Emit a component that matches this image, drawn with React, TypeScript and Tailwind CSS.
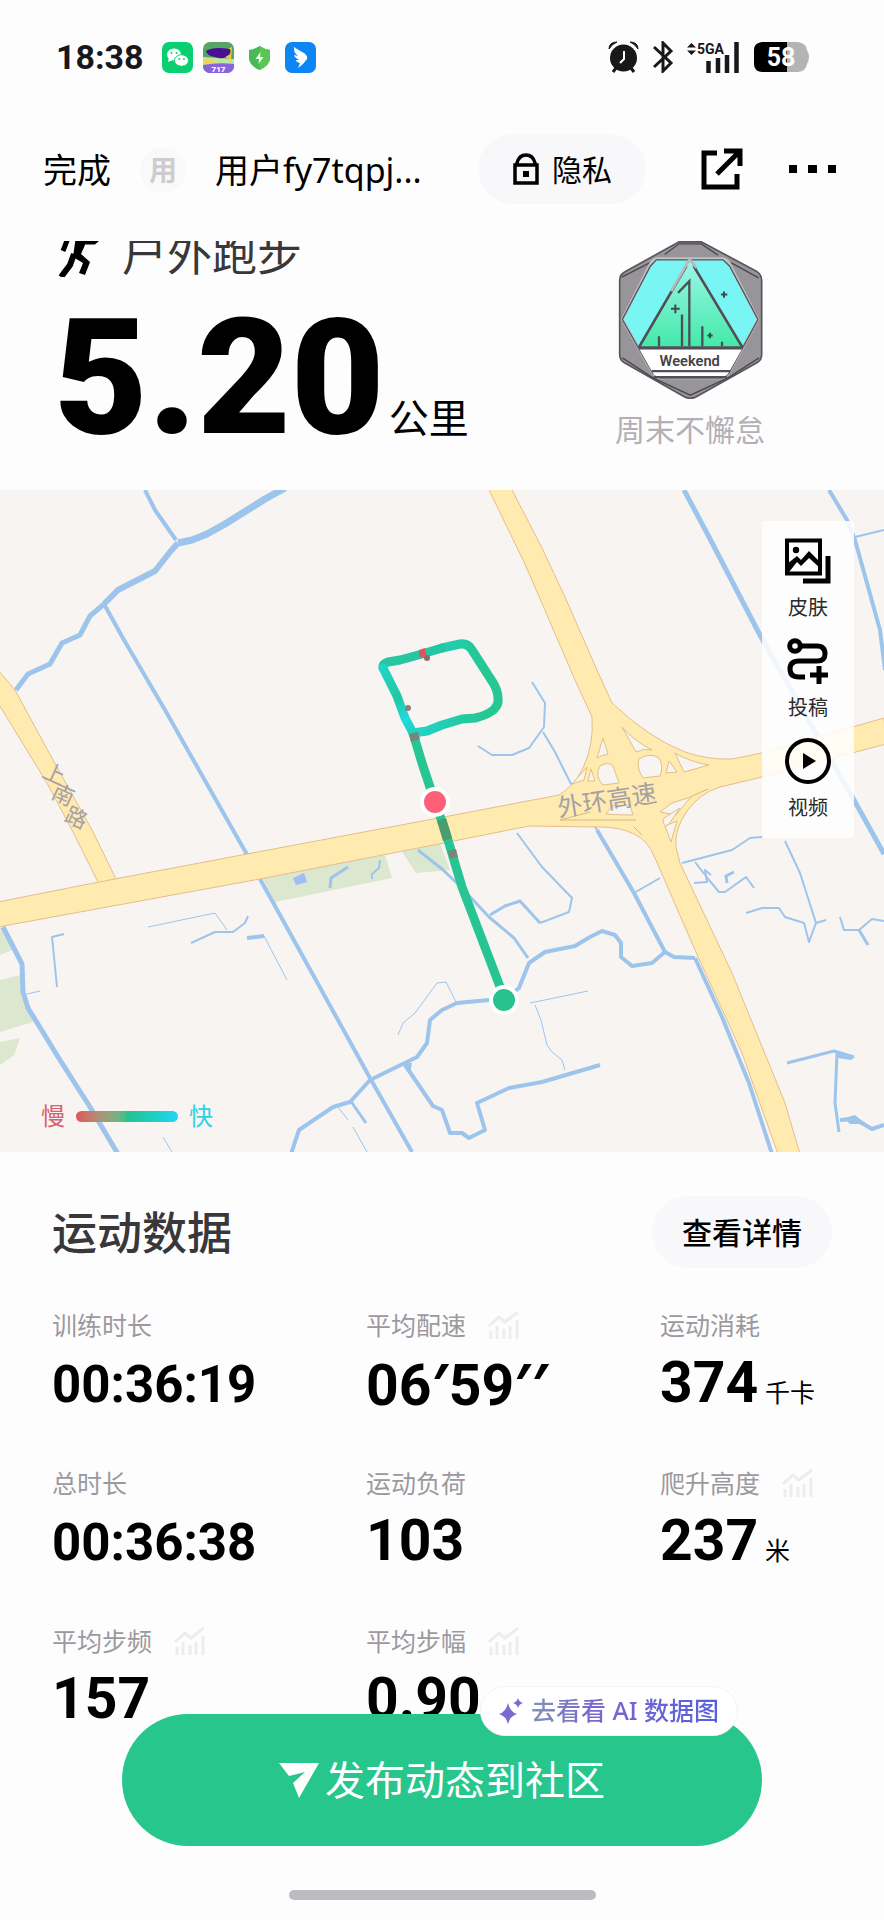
import type { ReactNode } from "react";

const RIVER = "#9dc5ec";
const LAND = "#f8f4f2";
const ROAD = "#ffebb0";

type Stat = { label: string; value: string; unit?: string; chart?: boolean; small?: boolean };

const STATS: Stat[] = [
  { label: "训练时长", value: "00:36:19", small: true },
  { label: "平均配速", value: "06′59′′", chart: true },
  { label: "运动消耗", value: "374", unit: "千卡" },
  { label: "总时长", value: "00:36:38", small: true },
  { label: "运动负荷", value: "103" },
  { label: "爬升高度", value: "237", unit: "米", chart: true },
  { label: "平均步频", value: "157", chart: true },
  { label: "平均步幅", value: "0.90", chart: true },
];

// 河道：[路径点, 线宽]
const RIVERS: [string, number][] = [
  ["145,0 155,20 176,50", 4],
  ["285,-2 265,9 225,34 207,44 192,50 178,53", 7],
  ["178,53 170,62 155,81 118,100 104,114", 6],
  ["104,114 90,126 80,145 62,153 50,174 28,184 16,200", 5],
  ["104,114 124,150 165,220 233,340 249,368", 4],
  ["260,389 275,416 370,588 412,662", 4],
  ["3,437 22,474 23,502 28,518 60,570 90,617 118,664", 5],
  ["148,437 215,423 227,440", 1],
  ["191,453 215,442 233,442 245,433 248,426", 2],
  ["247,448 264,446", 4],
  ["264,446 287,490", 1],
  ["64,444 52,447 57,497", 2],
  ["27,504 40,501", 1],
  ["348,377 331,388 330,398", 3],
  ["380,370 379,378 372,384 372,389", 2],
  ["418,360 442,379 459,395 475,412 489,427 514,448 528,468", 3],
  ["291,664 299,640 333,617 350,612 370,590 417,567 427,553 430,530 442,520 457,513 489,510 504,510 519,498 529,473 545,462 575,456 590,447 602,441 615,445 621,453 621,467 632,476 652,473 665,462 674,467 695,468", 4],
  ["695,468 722,527 749,593 772,664", 4],
  ["405,575 433,616 442,620 450,643 462,643 469,648 485,640 477,613 509,598 542,592 600,575", 4],
  ["530,513 588,501", 1],
  ["535,515 541,530 547,555 552,562 562,570 565,580", 1],
  ["456,512 446,492 437,493 415,523 403,533 398,545", 1],
  ["350,610 366,633", 3],
  ["338,617 348,630", 1],
  ["353,637 367,662", 1],
  ["163,647 172,662", 1],
  ["517,343 542,377 572,408 569,422 540,433", 2],
  ["540,433 520,411 505,416 490,425", 3],
  ["597,340 634,403 665,462", 4],
  ["634,403 660,388", 2],
  ["532,192 545,213 544,237 529,258 512,265 492,265 478,256", 2],
  ["543,242 555,262 569,290 597,340", 2],
  ["684,0 709,47 761,147 854,310 884,364", 5],
  ["829,0 847,30 855,50 880,140 885,180", 4],
  ["855,47 884,40", 2],
  ["682,373 732,360 750,348 762,347", 2],
  ["785,351 800,383 816,433 809,452 804,433 785,427 779,418 762,418 746,423", 2],
  ["816,433 826,430", 2],
  ["695,372 709,390 719,402 725,402 746,387 754,398", 2],
  ["694,393 707,392 705,380 711,385", 2],
  ["734,382 726,386 727,393", 3],
  ["840,427 844,440 859,440 872,429 884,431", 2],
  ["859,440 868,455", 3],
  ["787,573 834,561 854,567", 3],
  ["837,563 835,613 839,642", 3],
  ["840,630 855,629 872,639 884,635", 4],
];

// 立交桥匝道之间露出的地面
const GAPS = [
  "M622 237L636 262Q644 258 652 260Q633 250 622 237Z",
  "M639 269Q650 262 659 268Q664 276 660 286L643 288Q636 277 639 269Z",
  "M603 248L608 264Q602 265 597 268Z",
  "M600 276Q608 271 613 276L619 293L603 295Q594 286 600 276Z",
  "M675 263Q690 272 709 275L684 282Z",
  "M669 271L677 282L666 283Z",
  "M587 277L584 290L572 294Z",
  "M591 279L595 291L588 291Z",
  "M612 316L630 315L633 325Q618 325 606 324Z",
  "M660 322L672 313L691 307Q678 322 676 325Z",
  "M680 318L667 337Q661 333 664 328Z",
  "M665 336L677 331L671 352Z",
];

function WechatIcon() {
  return (
    <svg width="31" height="31" viewBox="0 0 31 31" aria-hidden="true">
      <rect width="31" height="31" rx="7" fill="#09cf70" />
      <path d="M6 20L7 15L13 17Z M24 24L23 20L19 21Z" fill="#fff" />
      <ellipse cx="12" cy="12.500" rx="7" ry="6" fill="#fff" />
      <ellipse cx="19.500" cy="18.500" rx="7" ry="5.800" fill="#fff" stroke="#09cf70" />
      <g fill="#09cf70">
        <circle cx="9.500" cy="11" r="1" />
        <circle cx="14.500" cy="11" r="1" />
        <circle cx="17.300" cy="17" r="1" />
        <circle cx="22" cy="17" r="1" />
      </g>
    </svg>
  );
}

function GameIcon() {
  return (
    <svg width="31" height="31" viewBox="0 0 31 31" aria-hidden="true">
      <clipPath id="game">
        <rect width="31" height="31" rx="7" />
      </clipPath>
      <g clipPath="url(#game)">
        <rect width="31" height="31" fill="#56a565" />
        <path d="M0 15L31 17V24H0Z" fill="#bfe6a0" />
        <path d="M0 18Q8 15 12 21L0 23Z" fill="#f1d84b" />
        <path d="M22 8L29 5L28 18L22 15Z" fill="#e3d02f" />
        <path d="M3 9Q10 4 27 7Q29 12 24 14Q20 18 12 15Q4 14 3 9Z" fill="#4a0e94" />
        <path d="M0 23Q15 20 31 22V31H0Z" fill="#8863dc" />
        <text x="15.500" y="30" textAnchor="middle" fill="#fff" fontSize="8" fontWeight="900" fontFamily="Roboto, sans-serif">717</text>
      </g>
    </svg>
  );
}

function ShieldIcon() {
  return (
    <svg width="31" height="31" viewBox="0 0 31 31" aria-hidden="true">
      <path d="M15.500 4Q20 7 26 8V17Q25 24 15.500 28Q6 24 5 17V8Q11 7 15.500 4Z" fill="#47b957" />
      <path d="M15.500 4Q20 7 26 8V17Q25 24 15.500 28Z" fill="#5bc653" />
      <path d="M16.500 10L11.500 17H15L14.500 22L19.500 15H16Z" fill="#e8ffe5" />
    </svg>
  );
}

function WingIcon() {
  return (
    <svg width="31" height="31" viewBox="0 0 31 31" aria-hidden="true">
      <rect width="31" height="31" rx="7" fill="#0b86f2" />
      <path d="M9 5Q15 9 19 11Q23 14 22 17L18 22L13 26L15 21Q11 20 11 18L14 18Q9 15 9 13L13 14Q8 10 9 5Z" fill="#fff" />
    </svg>
  );
}

function StatusBar() {
  return (
    <div className="flex h-[114px] items-center justify-between pr-[74px] pl-14">
      <div className="flex items-center gap-[10px]">
        <span className="mr-2 font-[Roboto,sans-serif] text-[34px] leading-none font-bold text-[#18181a]">18:38</span>
        <WechatIcon />
        <GameIcon />
        <ShieldIcon />
        <WingIcon />
      </div>
      <div className="flex items-center gap-[14px]">
        <svg width="31" height="32" viewBox="0 0 31 32" aria-hidden="true">
          <circle cx="15.500" cy="17" r="13.500" fill="#18181a" />
          <path d="M1 8Q1 1 9 1Q4 3 1 8ZM30 8Q30 1 22 1Q27 3 30 8Z" fill="#18181a" stroke="#18181a" />
          <path d="M8 27L5 31M23 27L26 31" stroke="#18181a" strokeWidth="3" />
          <path d="M16 10V18L12 22" fill="none" stroke="#fff" strokeWidth="2" />
        </svg>
        <svg width="20" height="32" viewBox="0 0 20 32" aria-hidden="true">
          <path d="M1 6L18 22L10 30V2L18 10L1 26" fill="none" stroke="#18181a" strokeWidth="3" />
        </svg>
        <svg width="53" height="32" viewBox="0 0 53 32" aria-hidden="true">
          <path d="M0 6.500L4.500 2L9 6.500ZM0 9.500H9L4.500 14Z" fill="#18181a" />
          <text x="10" y="13" fontSize="14" fontWeight="700" fontFamily="Roboto, sans-serif" fill="#18181a">5GA</text>
          <path d="M21.500 20V32M31 17V32M40 14V32M49.500 1V32" stroke="#18181a" strokeWidth="4.500" />
        </svg>
        <svg width="56" height="30" viewBox="0 0 56 30" aria-hidden="true">
          <path d="M8 0H44Q52 1 53 8Q57 15 53 22Q52 29 44 30H8Q0 29 0 22V8Q0 1 8 0Z" fill="#b4b4b6" />
          <path d="M33 0H8Q0 1 0 8V22Q0 29 8 30H33Z" fill="#000" />
          <text x="27" y="24" textAnchor="middle" fontSize="25" fontWeight="700" fontFamily="Roboto, sans-serif" fill="#fff">58</text>
        </svg>
      </div>
    </div>
  );
}

function TopNav() {
  return (
    <header className="flex h-[127px] items-start pr-12 pl-[43px] text-black">
      <button className="mt-9 text-[34px] leading-10">完成</button>
      <span className="mt-[33px] ml-[29px] grid size-[46px] place-items-center rounded-full bg-[#f9f9fa] text-[28px] leading-none font-bold text-[#cdcccf]">
        用
      </span>
      <span className="mt-8 ml-[29px] min-w-0 flex-1 text-[34px] leading-12 whitespace-nowrap">用户fy7tqpj...</span>
      <button className="mt-5 flex h-[70px] w-[168px] shrink-0 items-center justify-center gap-3 rounded-full bg-[#f8f7f9] text-[30px]">
        <svg width="28" height="32" viewBox="0 0 28 32" aria-hidden="true">
          <path d="M3 12H25V30H3ZM5 12V10Q7 2 14 2Q21 2 23 10V12" fill="none" stroke="#000" strokeWidth="3.500" />
          <rect x="11" y="18" width="6" height="6" />
        </svg>
        隐私
      </button>
      <button className="mt-[34px] ml-[55px] shrink-0" aria-label="分享">
        <svg width="42" height="42" viewBox="0 0 42 42" aria-hidden="true">
          <path d="M16 5H3V39H36V26" fill="none" stroke="#000" strokeWidth="5" />
          <path d="M16 26L37 5M23 3H39V18" fill="none" stroke="#000" strokeWidth="5" />
        </svg>
      </button>
      <button className="mt-[34px] ml-[46px] shrink-0" aria-label="更多">
        <svg width="47" height="42" viewBox="0 0 47 42" aria-hidden="true">
          <path d="M0 17H8V25H0ZM19 17H28V25H19ZM39 17H47V25H39Z" />
        </svg>
      </button>
    </header>
  );
}

function Badge() {
  return (
    <svg width="145" height="158" viewBox="85 30 435 473" aria-hidden="true">
      <defs>
        <linearGradient id="peak" x1="0" y1="0" x2="0" y2="1">
          <stop offset="0" stopColor="#9ff5ea" />
          <stop offset="1" stopColor="#43eaa9" />
        </linearGradient>
      </defs>
      <path d="M268 32H335L500 120Q516 130 516 148V370Q516 386 503 394L320 497Q302 506 284 497L103 394Q90 386 90 370V148Q90 130 106 122Z" fill="#98959a" stroke="#57545a" strokeWidth="5" />
      <path d="M225 70L268 38H335L385 72M96 138L180 95M507 140L425 95M98 380L190 440L302 492L415 440L508 380" fill="none" stroke="#4a474e" strokeWidth="4" />
      <path d="M200 82H400Q412 84 420 98L505 265L417 427Q410 438 397 440H212Q198 438 190 427L98 265L182 98Q190 84 200 82Z" fill="#79f6f3" stroke="#c2bfc4" strokeWidth="8" />
      <path d="M200 86H400L420 105L505 265L417 427L397 440H212L190 427L98 265L182 105Z" fill="none" stroke="#56535a" strokeWidth="4" />
      <path d="M302 88L458 346H148Z" fill="url(#peak)" />
      <path d="M148 348L290 105M312 105L458 348" fill="none" stroke="#514e55" strokeWidth="8" />
      <path d="M245 180L300 84L320 110" fill="none" stroke="#bab7bc" strokeWidth="8" />
      <path d="M148 352H458L415 428Q408 437 395 438H212Q198 437 190 426Z" fill="#fff" />
      <path d="M148 350H458" stroke="#514e55" strokeWidth="10" />
      <path d="M187 420H422M192 438H412" stroke="#514e55" strokeWidth="7" />
      <path d="M299 346V150L265 185M277 346V250M338 346V285M208 346V315M397 346V332" fill="none" stroke="#4b5257" strokeWidth="7" />
      <path d="M244 233H270M257 220V246M394 190H413M403 181V200M353 313H369M361 305V321" stroke="#3e4c50" strokeWidth="6" />
      <text x="300" y="404" textAnchor="middle" fontFamily="Roboto, sans-serif" fontWeight="600" fontSize="44" fill="#454248">Weekend</text>
    </svg>
  );
}

function Summary() {
  return (
    <section className="flex h-[249px] items-start justify-between overflow-hidden pr-[119px] pl-[54px]">
      <div className="-mt-3">
        <h1 className="flex h-12 items-center gap-[18px] text-[45px] leading-none text-[#38373a]">
          <svg width="50" height="48" viewBox="0 0 50 48" aria-hidden="true">
            <path d="M10 12L15 7H29L33 13L40 13L47 7" fill="none" stroke="#000" strokeWidth="5" />
            <path d="M22 7H35L27 25L36 33L31 46L25 44L29 34L19 28Z" />
            <path d="M20 25L16 36L7 48" fill="none" stroke="#000" strokeWidth="6" />
            <path d="M14 9L9 22" stroke="#000" strokeWidth="5" />
          </svg>
          户外跑步
        </h1>
        <p className="mt-5 flex items-baseline gap-1 text-black">
          <span className="font-[Roboto,sans-serif] text-[162px] leading-none font-black">5.20</span>
          <span className="text-[40px] leading-none">公里</span>
        </p>
      </div>
      <div className="flex flex-col items-center">
        <Badge />
        <span className="mt-[11px] text-[30px] leading-10 text-[#b2b0b5]">周末不懈怠</span>
      </div>
    </section>
  );
}

function MapTool({ label, children }: { label: string; children: ReactNode }) {
  return (
    <button className="flex flex-col items-center gap-[10px] text-[20px] leading-7 text-[#2b2a2c]">
      {children}
      {label}
    </button>
  );
}

function RouteMap() {
  return (
    <section className="relative">
      <svg className="block w-full" viewBox="0 0 884 662" role="img" aria-label="跑步轨迹">
        <defs>
          <linearGradient id="left" x1="383" y1="173" x2="413" y2="243" gradientUnits="userSpaceOnUse">
            <stop offset="0" stopColor="#21d6cc" />
            <stop offset=".5" stopColor="#23c8a0" />
            <stop offset=".8" stopColor="#1fdcdf" />
            <stop offset="1" stopColor="#23cfb8" />
          </linearGradient>
          <linearGradient id="loop" x1="413" y1="0" x2="480" y2="0" gradientUnits="userSpaceOnUse">
            <stop offset="0" stopColor="#20d3cc" />
            <stop offset="1" stopColor="#25c795" />
          </linearGradient>
        </defs>
        <rect width="884" height="662" fill={LAND} />
        <g fill="#dbe7cf">
          <path d="M262 387L385 365L392 388L275 412Z" />
          <path d="M402 362L440 353L450 380L416 383Z" />
          <path d="M0 437L5 440L12 460L0 465ZM0 490L20 485L24 510L33 532L0 542ZM0 552L20 548L14 565L0 575Z" />
        </g>
        <path d="M293 388L304 383L307 392L296 395Z" fill="#9fbdf3" />
        <path d="M834 560L855 567L851 570L838 568ZM403 573H412L410 584ZM844 628L855 625L866 634L850 634Z" fill={RIVER} />
        <g fill="none" stroke={RIVER} strokeLinejoin="round">
          {RIVERS.map(([points, width]) => (
            <polyline key={points} points={points} strokeWidth={width} />
          ))}
        </g>

        {/* 道路 */}
        <g fill={ROAD} stroke="#e5bd8c" strokeWidth="1">
          <path d="M-2 180L15 200L53 270L92 340L119 395L102 400L72 340L47 293L-2 213Z" />
          <path d="M-2 412L99 392L247 364L449 326L559 305Q575 295 583 278Q594 255 592 227L575 190L544 118L524 72L488 -2H511L542 58L565 107L597 180L612 213Q630 230 649 243Q665 254 685 262Q708 270 732 269L762 263L884 228L886 254L762 287L720 297Q700 303 687 321Q674 340 676 357L680 373L732 483L785 613L800 664H778L742 563L695 460L655 368Q648 350 634 344Q620 337 600 337L529 336L454 351L260 389L-2 437Z" />
          <path d="M102 393L118 390L126 412L112 414Z" stroke="none" />
        </g>
        <g fill={LAND} stroke="#dfc183" strokeWidth="1">
          {GAPS.map((d) => (
            <path key={d} d={d} />
          ))}
        </g>
        <path d="M560 330H636M560 330L590 322M634 337L642 345M690 307L708 299" fill="none" stroke="#d6b880" />

        <g fontFamily="'Noto Sans CJK SC', sans-serif" fill="#a5a0a6">
          <text fontSize="25" transform="translate(559 327) rotate(-9)">外环高速</text>
          <g fontSize="22" textAnchor="middle">
            <text transform="translate(51 291) rotate(24)">上</text>
            <text transform="translate(60 312) rotate(24)">南</text>
            <text transform="translate(73 335) rotate(24)">路</text>
          </g>
        </g>

        {/* 轨迹 */}
        <g fill="none" strokeWidth="9" strokeLinecap="round" strokeLinejoin="round">
          <path d="M413 243L422 273L435 312L445 340L462 397L499 494L504 510" stroke="#27c494" />
          <path d="M413 243L427 241L442 235L462 229L475 228Q500 222 498 208Q498 199 490 188L472 160Q468 153 460 154L442 158" stroke="url(#loop)" />
          <path d="M442 158L422 164L400 170L388 172Q382 174 383 178" stroke="#25c6a0" />
          <path d="M383 178L397 206L405 228L413 243" stroke="url(#left)" />
        </g>
        <path d="M419 160L425 158L427 168L419 167Z" fill="#e2545d" />
        <circle cx="427" cy="168" r="3" fill="#8d6c67" />
        <circle cx="408" cy="218" r="3" fill="#8d7f78" />
        <path d="M409 244L418 242L420 249L411 252ZM448 361L456 359L458 367L450 369Z" fill="#77877a" />
        <path d="M437 331L446 328L452 348L443 351Z" fill="#4b9c6e" />
        <circle cx="435" cy="312" r="13" fill="#ff6078" stroke="#fff" strokeWidth="4" />
        <circle cx="504" cy="510" r="13" fill="#27c28e" stroke="#fff" strokeWidth="4" />
      </svg>

      <div className="absolute top-[31px] right-[30px] flex h-[317px] w-[92px] flex-col items-center gap-4 rounded-sm bg-white/85 pt-[17px]">
        <MapTool label="皮肤">
          <svg width="46" height="46" viewBox="0 0 46 46" aria-hidden="true">
            <rect x="2" y="2.500" width="33" height="33" fill="none" stroke="#000" strokeWidth="4" />
            <path d="M2 33V26L12 18L16 22L24 13L35 24V30L24 20L16 28L12 24L4 34Z" />
            <circle cx="11" cy="12" r="3.200" />
            <path d="M43 18V43H18" fill="none" stroke="#000" strokeWidth="5" />
          </svg>
        </MapTool>
        <MapTool label="投稿">
          <svg width="42" height="46" viewBox="0 0 42 46" aria-hidden="true">
            <g fill="none" stroke="#000" strokeWidth="5">
              <circle cx="8" cy="8" r="5.300" />
              <path d="M13 8H30Q38 8 38 16Q38 23 30 23H12Q3 23 3 31Q3 39 12 39H18" />
              <path d="M32 28V46M23 37H41" />
            </g>
          </svg>
        </MapTool>
        <MapTool label="视频">
          <svg width="46" height="46" viewBox="0 0 46 46" aria-hidden="true">
            <circle cx="23" cy="23" r="21" fill="none" stroke="#000" strokeWidth="4" />
            <path d="M18 15L31 23L18 31Z" />
          </svg>
        </MapTool>
      </div>

      <div className="absolute bottom-5 left-[41px] flex items-center gap-[11px] text-2xl leading-8">
        <span className="text-[#d9606c]">慢</span>
        <span className="h-[11px] w-[102px] rounded-full bg-linear-to-r from-[#dc5560] via-[#25c28c] via-50% to-[#22d6f5]" />
        <span className="text-[#2bd3e4]">快</span>
      </div>
    </section>
  );
}

function ChartIcon() {
  return (
    <svg width="32" height="28" viewBox="0 0 32 28" aria-hidden="true">
      <g fill="none" stroke="#eeecf0" strokeWidth="3">
        <path d="M1 15L11 6L17 11L30 1" />
        <path d="M3 20V28M9 15V28M16 18V28M22 15V28M29 9V28" />
      </g>
    </svg>
  );
}

// Roboto 的角分符号是竖直的，单独换成带斜度的字形
function StatValue({ value, small }: { value: string; small?: boolean }) {
  return (
    <span
      className={
        small
          ? "font-[Roboto,sans-serif] text-[51px] leading-15 font-bold"
          : "font-[Roboto,sans-serif] text-[57px] leading-14 font-bold"
      }
    >
      {value.split(/(′+)/).map((part, i) =>
        part.startsWith("′") ? (
          <span key={i} className="font-['Open_Sans',sans-serif]">
            {part}
          </span>
        ) : (
          part
        ),
      )}
    </span>
  );
}

function StatsPanel() {
  return (
    <section className="px-[52px] pt-11">
      <div className="flex items-center justify-between">
        <h2 className="text-[45px] leading-none font-medium text-[#38373a]">运动数据</h2>
        <button className="h-[72px] w-[180px] rounded-full bg-[#f8f7f9] text-[30px] font-medium text-black">
          查看详情
        </button>
      </div>
      <dl className="mt-[41px] grid grid-cols-[314fr_294fr_172fr] gap-y-14">
        {STATS.map((s) => (
          <div key={s.label}>
            <dt className="flex h-8 items-center gap-[22px] text-[25px] leading-8 text-[#9b999d]">
              {s.label}
              {s.chart && <ChartIcon />}
            </dt>
            <dd className="mt-[14px] flex h-14 items-baseline gap-[7px] text-black">
              <StatValue value={s.value} small={s.small} />
              {s.unit && <span className="text-[25px] leading-none">{s.unit}</span>}
            </dd>
          </div>
        ))}
      </dl>
    </section>
  );
}

function PublishBar() {
  return (
    <footer className="fixed inset-x-0 bottom-0 flex flex-col items-center px-[122px] pb-5">
      <div className="relative w-full">
        <button className="flex h-[132px] w-full items-center justify-center gap-[5px] rounded-full bg-[#27c68d] text-[40px] text-white">
          <svg width="41" height="36" viewBox="0 0 41 36" aria-hidden="true">
            <path d="M0 1H40L20 36L14 21L26 10L10 14Z" fill="#fff" />
          </svg>
          发布动态到社区
        </button>
        <button className="absolute -top-7 right-6 flex h-[50px] w-[258px] items-center justify-center gap-2 rounded-full border border-[#f3f1f6] bg-white text-[25px] font-medium">
          <svg width="24" height="26" viewBox="0 0 24 26" aria-hidden="true">
            <path d="M9 5Q11 14 18 16Q11 18 9 26Q7 18 0 16Q7 14 9 5ZM19 0Q20 4 24 5Q20 6 19 10Q18 6 14 5Q18 4 19 0Z" fill="#7b6bd0" />
          </svg>
          <span className="bg-linear-to-r from-[#7d95b8] via-[#7d68cb] via-30% to-[#5360e0] bg-clip-text whitespace-nowrap text-transparent">
            去看看 AI 数据图
          </span>
        </button>
      </div>
      <div className="mt-11 h-[10px] w-[307px] rounded-full bg-[#bdbbbf]" />
    </footer>
  );
}

export default function App() {
  return (
    <div className="min-h-screen bg-[#fefdfe] font-['Noto_Sans','Noto_Sans_CJK_SC',sans-serif]">
      <StatusBar />
      <TopNav />
      <main>
        <Summary />
        <RouteMap />
        <StatsPanel />
      </main>
      <PublishBar />
    </div>
  );
}
